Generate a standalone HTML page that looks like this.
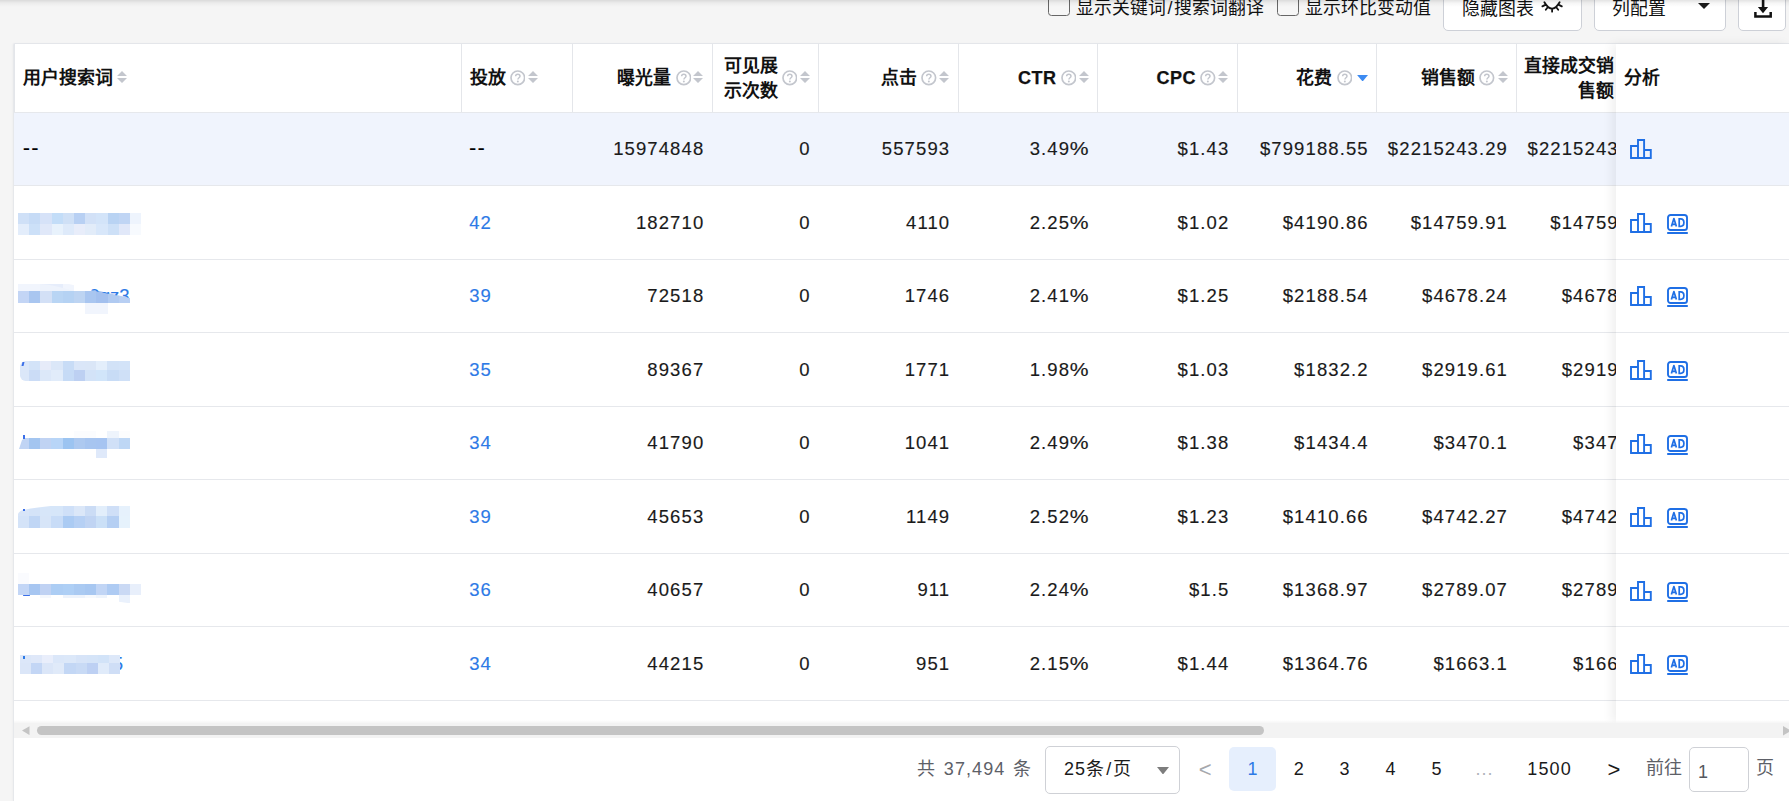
<!DOCTYPE html>
<html lang="zh-CN">
<head>
<meta charset="utf-8">
<title>搜索词</title>
<style>
*{box-sizing:border-box;margin:0;padding:0}
html,body{width:1789px;height:801px;overflow:hidden}
body{background:#f5f5f5;font-family:"Liberation Sans",sans-serif;font-size:17.5px;color:#1a1a1a;position:relative}
.abs{position:absolute}
.topshadow{position:absolute;left:0;top:0;width:1789px;height:7px;z-index:9;background:linear-gradient(rgba(0,0,0,.11),rgba(0,0,0,.035) 45%,rgba(0,0,0,0))}
.card{position:absolute;left:13px;top:43px;width:1776px;height:758px;background:#fff;border-left:1px solid #e6e8eb;border-top:1px solid #e4e6ea;border-top-left-radius:2px;box-shadow:-1px 0 2px rgba(0,0,0,.025)}
.cb{position:absolute;top:-6px;width:22px;height:22px;background:#f6f6f6;border:1.6px solid #666;border-radius:3.5px}
.lbl{position:absolute;top:-6px;height:24px;line-height:24px;font-size:17.9px;font-weight:300;color:#111;white-space:nowrap}
.btn{position:absolute;top:-10px;height:41px;background:#fff;border:1px solid #cdd0d7;border-radius:5px}
.hline{position:absolute;left:14px;width:1775px;height:1px;background:#e6e8ec}
.vline{position:absolute;top:44px;height:68px;width:1px;background:#e4e6ea}
.sum{position:absolute;left:14px;top:113px;width:1775px;height:72px;background:#f0f4fd}
.th{position:absolute;font-weight:bold;font-size:17.9px;line-height:25px;color:#111;white-space:nowrap}
.th.en{font-size:18px;letter-spacing:.5px;-webkit-text-stroke:.25px #111}
.td{position:absolute;height:24px;line-height:24px;font-size:18.5px;letter-spacing:1.1px;white-space:nowrap;color:#1a1a1a;-webkit-text-stroke:.15px}
.td.r{text-align:right}
.td.dash{font-size:22px;letter-spacing:1.2px;-webkit-text-stroke:0;color:#000}
.pc{display:inline-block;transform:scaleX(1.14);transform-origin:100% 50%;margin-left:2.4px;letter-spacing:0;margin-right:1.1px}
.td.a{color:#2d7ae6}
.q{position:absolute;width:15.6px;height:15.6px;margin:-.3px 0 0 -.3px}
.ca{position:absolute;width:10px;height:12px}
.fix{position:absolute;left:1616px;top:44px;width:173px;height:679px;background:#fff;box-shadow:-4px 0 10px rgba(0,0,0,.065)}
.fixsum{position:absolute;left:0;top:69px;width:173px;height:72px;background:#f0f4fd}
.fl{position:absolute;left:0;width:173px;height:1px;background:#e6e8ec}
.mz{position:absolute}
.pg{position:absolute;top:756.8px;height:24px;line-height:24px;font-size:18px;letter-spacing:1.1px;white-space:nowrap;color:#1a1a1a;text-align:center}
</style>
</head>
<body>
<div class="cb" style="left:1048px"></div>
<div class="lbl" style="left:1076px;top:-4.3px">显示关键词<span style="margin:0 1.6px">/</span>搜索词翻译</div>
<div class="cb" style="left:1277px"></div>
<div class="lbl" style="left:1305px;top:-4.3px">显示环比变动值</div>
<div class="btn" style="left:1443px;width:139px"></div>
<div class="lbl" style="left:1462px;top:-3.5px">隐藏图表</div>
<svg class="abs" style="left:1541px;top:0px" width="22" height="13" viewBox="0 0 22 13"><path d="M3.4 2.2Q11.1 15 18.6 2.2M4.3 4.9L1.4 6.4M6.7 7.2L4.8 9.7M11.1 8.6V11.7M15.3 7.2L17.2 9.7M17.9 4.9L20.8 6.4" fill="none" stroke="#111" stroke-width="1.8" stroke-linecap="round"/></svg>
<div class="btn" style="left:1594px;width:132px"></div>
<div class="lbl" style="left:1612px;top:-3.5px">列配置</div>
<svg class="abs" style="left:1698px;top:3px" width="12" height="6" viewBox="0 0 12 6"><path d="M0 0H12L6 6Z" fill="#1a1a1a"/></svg>
<div class="btn" style="left:1738px;width:48px"></div>
<svg class="abs" style="left:1753px;top:0px" width="20" height="19" viewBox="0 0 20 19"><path d="M8.8 0H11.4V7.1H15.1L10 13.2L4.9 7.1H8.8Z" fill="#111"/><path d="M2.4 12V16.6H17.7V12" fill="none" stroke="#111" stroke-width="2.5"/></svg>
<div class="topshadow"></div>
<div class="card"></div>
<div class="sum"></div>
<div class="hline" style="top:112px"></div>
<div class="hline" style="top:185px"></div>
<div class="hline" style="top:259px"></div>
<div class="hline" style="top:332px"></div>
<div class="hline" style="top:406px"></div>
<div class="hline" style="top:479px"></div>
<div class="hline" style="top:553px"></div>
<div class="hline" style="top:626px"></div>
<div class="hline" style="top:700px"></div>
<div class="vline" style="left:14px"></div>
<div class="vline" style="left:461px"></div>
<div class="vline" style="left:572px"></div>
<div class="vline" style="left:712px"></div>
<div class="vline" style="left:818px"></div>
<div class="vline" style="left:958px"></div>
<div class="vline" style="left:1097px"></div>
<div class="vline" style="left:1237px"></div>
<div class="vline" style="left:1376px"></div>
<div class="vline" style="left:1516px"></div>
<div class="th" style="left:23.4px;width:100px;top:66px;text-align:left">用户搜索词</div>
<svg class="ca" style="left:117px;top:71.3px" viewBox="0 0 10 12"><path d="M0 5H10L5 0Z M0 7H10L5 12Z" fill="#c3c6cd"/></svg>
<div class="th" style="left:469.9px;width:60px;top:66px;text-align:left">投放</div>
<svg class="q" style="left:510px;top:70.3px" viewBox="0 0 15 15"><circle cx="7.5" cy="7.5" r="6.55" fill="none" stroke="#c3c6cd" stroke-width="1.6"/><path d="M5.4 6.1c0-1.3 1-2.1 2.1-2.1s2.1.8 2.1 1.9c0 1.5-2 1.6-2 3.2" fill="none" stroke="#c3c6cd" stroke-width="1.45"/><circle cx="7.55" cy="11" r=".95" fill="#c3c6cd"/></svg>
<svg class="ca" style="left:527.6px;top:71.3px" viewBox="0 0 10 12"><path d="M0 5H10L5 0Z M0 7H10L5 12Z" fill="#c3c6cd"/></svg>
<div class="th" style="left:590px;width:81px;top:66px;text-align:right">曝光量</div>
<svg class="q" style="left:676px;top:70.3px" viewBox="0 0 15 15"><circle cx="7.5" cy="7.5" r="6.55" fill="none" stroke="#c3c6cd" stroke-width="1.6"/><path d="M5.4 6.1c0-1.3 1-2.1 2.1-2.1s2.1.8 2.1 1.9c0 1.5-2 1.6-2 3.2" fill="none" stroke="#c3c6cd" stroke-width="1.45"/><circle cx="7.55" cy="11" r=".95" fill="#c3c6cd"/></svg>
<svg class="ca" style="left:693.4px;top:71.3px" viewBox="0 0 10 12"><path d="M0 5H10L5 0Z M0 7H10L5 12Z" fill="#c3c6cd"/></svg>
<div class="th" style="left:723.9px;width:60px;top:53.5px;text-align:left">可见展<br>示次数</div>
<svg class="q" style="left:782px;top:70.3px" viewBox="0 0 15 15"><circle cx="7.5" cy="7.5" r="6.55" fill="none" stroke="#c3c6cd" stroke-width="1.6"/><path d="M5.4 6.1c0-1.3 1-2.1 2.1-2.1s2.1.8 2.1 1.9c0 1.5-2 1.6-2 3.2" fill="none" stroke="#c3c6cd" stroke-width="1.45"/><circle cx="7.55" cy="11" r=".95" fill="#c3c6cd"/></svg>
<svg class="ca" style="left:799.6px;top:71.3px" viewBox="0 0 10 12"><path d="M0 5H10L5 0Z M0 7H10L5 12Z" fill="#c3c6cd"/></svg>
<div class="th" style="left:830px;width:87px;top:66px;text-align:right">点击</div>
<svg class="q" style="left:921.4px;top:70.3px" viewBox="0 0 15 15"><circle cx="7.5" cy="7.5" r="6.55" fill="none" stroke="#c3c6cd" stroke-width="1.6"/><path d="M5.4 6.1c0-1.3 1-2.1 2.1-2.1s2.1.8 2.1 1.9c0 1.5-2 1.6-2 3.2" fill="none" stroke="#c3c6cd" stroke-width="1.45"/><circle cx="7.55" cy="11" r=".95" fill="#c3c6cd"/></svg>
<svg class="ca" style="left:939px;top:71.3px" viewBox="0 0 10 12"><path d="M0 5H10L5 0Z M0 7H10L5 12Z" fill="#c3c6cd"/></svg>
<div class="th en" style="left:970px;width:86.5px;top:66px;text-align:right">CTR</div>
<svg class="q" style="left:1061px;top:70.3px" viewBox="0 0 15 15"><circle cx="7.5" cy="7.5" r="6.55" fill="none" stroke="#c3c6cd" stroke-width="1.6"/><path d="M5.4 6.1c0-1.3 1-2.1 2.1-2.1s2.1.8 2.1 1.9c0 1.5-2 1.6-2 3.2" fill="none" stroke="#c3c6cd" stroke-width="1.45"/><circle cx="7.55" cy="11" r=".95" fill="#c3c6cd"/></svg>
<svg class="ca" style="left:1078.8px;top:71.3px" viewBox="0 0 10 12"><path d="M0 5H10L5 0Z M0 7H10L5 12Z" fill="#c3c6cd"/></svg>
<div class="th en" style="left:1110px;width:86px;top:66px;text-align:right">CPC</div>
<svg class="q" style="left:1200.7px;top:70.3px" viewBox="0 0 15 15"><circle cx="7.5" cy="7.5" r="6.55" fill="none" stroke="#c3c6cd" stroke-width="1.6"/><path d="M5.4 6.1c0-1.3 1-2.1 2.1-2.1s2.1.8 2.1 1.9c0 1.5-2 1.6-2 3.2" fill="none" stroke="#c3c6cd" stroke-width="1.45"/><circle cx="7.55" cy="11" r=".95" fill="#c3c6cd"/></svg>
<svg class="ca" style="left:1218.2px;top:71.3px" viewBox="0 0 10 12"><path d="M0 5H10L5 0Z M0 7H10L5 12Z" fill="#c3c6cd"/></svg>
<div class="th" style="left:1250px;width:82.3px;top:66px;text-align:right">花费</div>
<svg class="q" style="left:1337.2px;top:70.3px" viewBox="0 0 15 15"><circle cx="7.5" cy="7.5" r="6.55" fill="none" stroke="#c3c6cd" stroke-width="1.6"/><path d="M5.4 6.1c0-1.3 1-2.1 2.1-2.1s2.1.8 2.1 1.9c0 1.5-2 1.6-2 3.2" fill="none" stroke="#c3c6cd" stroke-width="1.45"/><circle cx="7.55" cy="11" r=".95" fill="#c3c6cd"/></svg>
<svg class="abs" style="left:1356.9px;top:74.8px" width="11.2" height="6.5" viewBox="0 0 11 6.5"><path d="M0 0H11L5.5 6.5Z" fill="#3d8bf2"/></svg>
<div class="th" style="left:1390px;width:85.3px;top:66px;text-align:right">销售额</div>
<svg class="q" style="left:1479.6px;top:70.3px" viewBox="0 0 15 15"><circle cx="7.5" cy="7.5" r="6.55" fill="none" stroke="#c3c6cd" stroke-width="1.6"/><path d="M5.4 6.1c0-1.3 1-2.1 2.1-2.1s2.1.8 2.1 1.9c0 1.5-2 1.6-2 3.2" fill="none" stroke="#c3c6cd" stroke-width="1.45"/><circle cx="7.55" cy="11" r=".95" fill="#c3c6cd"/></svg>
<svg class="ca" style="left:1497.5px;top:71.3px" viewBox="0 0 10 12"><path d="M0 5H10L5 0Z M0 7H10L5 12Z" fill="#c3c6cd"/></svg>
<div class="th" style="left:1520px;width:94px;top:53.5px;text-align:right">直接成交销<br>售额</div>
<svg class="q" style="left:1618px;top:70.3px" viewBox="0 0 15 15"><circle cx="7.5" cy="7.5" r="6.55" fill="none" stroke="#c3c6cd" stroke-width="1.6"/><path d="M5.4 6.1c0-1.3 1-2.1 2.1-2.1s2.1.8 2.1 1.9c0 1.5-2 1.6-2 3.2" fill="none" stroke="#c3c6cd" stroke-width="1.45"/><circle cx="7.55" cy="11" r=".95" fill="#c3c6cd"/></svg>
<svg class="ca" style="left:1636px;top:71.3px" viewBox="0 0 10 12"><path d="M0 5H10L5 0Z M0 7H10L5 12Z" fill="#c3c6cd"/></svg>
<div class="td dash" style="left:22.8px;top:135.7px">--</div>
<div class="td dash" style="left:469px;top:135.7px">--</div>
<div class="td r" style="left:564.3px;width:140px;top:137px">15974848</div>
<div class="td r" style="left:670.6px;width:140px;top:137px">0</div>
<div class="td r" style="left:810.2px;width:140px;top:137px">557593</div>
<div class="td r" style="left:950px;width:140px;top:137px">3.49<span class="pc">%</span></div>
<div class="td r" style="left:1089.4px;width:140px;top:137px">$1.43</div>
<div class="td r" style="left:1228.7px;width:140px;top:137px">$799188.55</div>
<div class="td r" style="left:1368px;width:140px;top:137px">$2215243.29</div>
<div class="td r" style="left:1507.7px;width:140px;top:137px">$2215243.29</div>
<div class="td a" style="left:469.2px;top:210.5px">42</div>
<div class="td r" style="left:564.3px;width:140px;top:210.5px">182710</div>
<div class="td r" style="left:670.6px;width:140px;top:210.5px">0</div>
<div class="td r" style="left:810.2px;width:140px;top:210.5px">4110</div>
<div class="td r" style="left:950px;width:140px;top:210.5px">2.25<span class="pc">%</span></div>
<div class="td r" style="left:1089.4px;width:140px;top:210.5px">$1.02</div>
<div class="td r" style="left:1228.7px;width:140px;top:210.5px">$4190.86</div>
<div class="td r" style="left:1368px;width:140px;top:210.5px">$14759.91</div>
<div class="td r" style="left:1507.7px;width:140px;top:210.5px">$14759.91</div>
<div class="td a" style="left:469.2px;top:284px">39</div>
<div class="td r" style="left:564.3px;width:140px;top:284px">72518</div>
<div class="td r" style="left:670.6px;width:140px;top:284px">0</div>
<div class="td r" style="left:810.2px;width:140px;top:284px">1746</div>
<div class="td r" style="left:950px;width:140px;top:284px">2.41<span class="pc">%</span></div>
<div class="td r" style="left:1089.4px;width:140px;top:284px">$1.25</div>
<div class="td r" style="left:1228.7px;width:140px;top:284px">$2188.54</div>
<div class="td r" style="left:1368px;width:140px;top:284px">$4678.24</div>
<div class="td r" style="left:1507.7px;width:140px;top:284px">$4678.24</div>
<div class="td a" style="left:469.2px;top:357.5px">35</div>
<div class="td r" style="left:564.3px;width:140px;top:357.5px">89367</div>
<div class="td r" style="left:670.6px;width:140px;top:357.5px">0</div>
<div class="td r" style="left:810.2px;width:140px;top:357.5px">1771</div>
<div class="td r" style="left:950px;width:140px;top:357.5px">1.98<span class="pc">%</span></div>
<div class="td r" style="left:1089.4px;width:140px;top:357.5px">$1.03</div>
<div class="td r" style="left:1228.7px;width:140px;top:357.5px">$1832.2</div>
<div class="td r" style="left:1368px;width:140px;top:357.5px">$2919.61</div>
<div class="td r" style="left:1507.7px;width:140px;top:357.5px">$2919.61</div>
<div class="td a" style="left:469.2px;top:431.25px">34</div>
<div class="td r" style="left:564.3px;width:140px;top:431.25px">41790</div>
<div class="td r" style="left:670.6px;width:140px;top:431.25px">0</div>
<div class="td r" style="left:810.2px;width:140px;top:431.25px">1041</div>
<div class="td r" style="left:950px;width:140px;top:431.25px">2.49<span class="pc">%</span></div>
<div class="td r" style="left:1089.4px;width:140px;top:431.25px">$1.38</div>
<div class="td r" style="left:1228.7px;width:140px;top:431.25px">$1434.4</div>
<div class="td r" style="left:1368px;width:140px;top:431.25px">$3470.1</div>
<div class="td r" style="left:1507.7px;width:140px;top:431.25px">$3470.1</div>
<div class="td a" style="left:469.2px;top:504.75px">39</div>
<div class="td r" style="left:564.3px;width:140px;top:504.75px">45653</div>
<div class="td r" style="left:670.6px;width:140px;top:504.75px">0</div>
<div class="td r" style="left:810.2px;width:140px;top:504.75px">1149</div>
<div class="td r" style="left:950px;width:140px;top:504.75px">2.52<span class="pc">%</span></div>
<div class="td r" style="left:1089.4px;width:140px;top:504.75px">$1.23</div>
<div class="td r" style="left:1228.7px;width:140px;top:504.75px">$1410.66</div>
<div class="td r" style="left:1368px;width:140px;top:504.75px">$4742.27</div>
<div class="td r" style="left:1507.7px;width:140px;top:504.75px">$4742.27</div>
<div class="td a" style="left:469.2px;top:578.25px">36</div>
<div class="td r" style="left:564.3px;width:140px;top:578.25px">40657</div>
<div class="td r" style="left:670.6px;width:140px;top:578.25px">0</div>
<div class="td r" style="left:810.2px;width:140px;top:578.25px">911</div>
<div class="td r" style="left:950px;width:140px;top:578.25px">2.24<span class="pc">%</span></div>
<div class="td r" style="left:1089.4px;width:140px;top:578.25px">$1.5</div>
<div class="td r" style="left:1228.7px;width:140px;top:578.25px">$1368.97</div>
<div class="td r" style="left:1368px;width:140px;top:578.25px">$2789.07</div>
<div class="td r" style="left:1507.7px;width:140px;top:578.25px">$2789.07</div>
<div class="td a" style="left:469.2px;top:651.75px">34</div>
<div class="td r" style="left:564.3px;width:140px;top:651.75px">44215</div>
<div class="td r" style="left:670.6px;width:140px;top:651.75px">0</div>
<div class="td r" style="left:810.2px;width:140px;top:651.75px">951</div>
<div class="td r" style="left:950px;width:140px;top:651.75px">2.15<span class="pc">%</span></div>
<div class="td r" style="left:1089.4px;width:140px;top:651.75px">$1.44</div>
<div class="td r" style="left:1228.7px;width:140px;top:651.75px">$1364.76</div>
<div class="td r" style="left:1368px;width:140px;top:651.75px">$1663.1</div>
<div class="td r" style="left:1507.7px;width:140px;top:651.75px">$1663.1</div>
<div class="mz" style="left:18px;top:213px;width:11.3px;height:10.5px;background:#cfe0f7"></div><div class="mz" style="left:29.2px;top:213px;width:11.3px;height:10.5px;background:#c6dbf6"></div><div class="mz" style="left:40.4px;top:213px;width:11.3px;height:10.5px;background:#d6e2f8"></div><div class="mz" style="left:51.6px;top:213px;width:11.3px;height:10.5px;background:#c3ddf8"></div><div class="mz" style="left:62.8px;top:213px;width:11.3px;height:10.5px;background:#cfe0f6"></div><div class="mz" style="left:74px;top:213px;width:11.3px;height:10.5px;background:#b8d0f3"></div><div class="mz" style="left:85.2px;top:213px;width:11.3px;height:10.5px;background:#d2e1f7"></div><div class="mz" style="left:96.4px;top:213px;width:11.3px;height:10.5px;background:#d3e4f9"></div><div class="mz" style="left:107.6px;top:213px;width:11.3px;height:10.5px;background:#b9d3f3"></div><div class="mz" style="left:118.8px;top:213px;width:11.3px;height:10.5px;background:#c0d5f4"></div><div class="mz" style="left:130px;top:213px;width:11.3px;height:10.5px;background:#eef4fd"></div><div class="mz" style="left:18px;top:223.5px;width:11.3px;height:11px;background:#e3edfb"></div><div class="mz" style="left:29.2px;top:223.5px;width:11.3px;height:11px;background:#cce0f8"></div><div class="mz" style="left:40.4px;top:223.5px;width:11.3px;height:11px;background:#e0e8f9"></div><div class="mz" style="left:51.6px;top:223.5px;width:11.3px;height:11px;background:#e8f2fc"></div><div class="mz" style="left:62.8px;top:223.5px;width:11.3px;height:11px;background:#deeafa"></div><div class="mz" style="left:74px;top:223.5px;width:11.3px;height:11px;background:#e8edfa"></div><div class="mz" style="left:85.2px;top:223.5px;width:11.3px;height:11px;background:#e2ecf9"></div><div class="mz" style="left:96.4px;top:223.5px;width:11.3px;height:11px;background:#d8e7fa"></div><div class="mz" style="left:107.6px;top:223.5px;width:11.3px;height:11px;background:#cde0f7"></div><div class="mz" style="left:118.8px;top:223.5px;width:11.3px;height:11px;background:#e1e8f9"></div><div class="mz" style="left:130px;top:223.5px;width:11.3px;height:11px;background:#f7fafe"></div>
<div class="mz" style="left:18px;top:284px;width:11.3px;height:7px;background:#f1f5fd"></div><div class="mz" style="left:29.2px;top:284px;width:11.3px;height:7px;background:#f1f5fd"></div><div class="mz" style="left:40.4px;top:284px;width:11.3px;height:7px;background:#e6edfb"></div><div class="mz" style="left:51.6px;top:284px;width:11.3px;height:7px;background:#e6edfb"></div><div class="mz" style="left:62.8px;top:284px;width:11.3px;height:7px;background:#f1f5fd"></div><div class="mz" style="left:18px;top:291px;width:11.3px;height:12px;background:#c3d5f5"></div><div class="mz" style="left:29.2px;top:291px;width:11.3px;height:12px;background:#a9c6f0"></div><div class="mz" style="left:40.4px;top:291px;width:11.3px;height:12px;background:#d3e0f6"></div><div class="mz" style="left:51.6px;top:291px;width:11.3px;height:12px;background:#b9d5f4"></div><div class="mz" style="left:62.8px;top:291px;width:11.3px;height:12px;background:#b5d2f3"></div><div class="mz" style="left:74px;top:291px;width:11.3px;height:12px;background:#bdd4f2"></div><div class="mz" style="left:85.2px;top:291px;width:11.3px;height:12px;background:#a9c6f0"></div><div class="mz" style="left:96.4px;top:291px;width:11.3px;height:12px;background:#a3c0ee"></div><div class="mz" style="left:107.6px;top:291px;width:11.3px;height:12px;background:#b0caf1"></div><div class="mz" style="left:118.8px;top:291px;width:11.3px;height:12px;background:#b8cff3"></div><div class="mz" style="left:85.2px;top:303px;width:11.3px;height:11px;background:#f1f5fd"></div><div class="mz" style="left:96.4px;top:303px;width:11.3px;height:11px;background:#f1f5fd"></div>
<svg class="abs" style="left:40px;top:282px" width="92" height="18" viewBox="0 0 92 18"><path d="M0 0H20L92 16.5V0Z" fill="#fff"/><path d="M0 2Q10 2 34 9H0Z" fill="#eef3fc"/></svg>
<div class="td a" style="left:77px;top:283.5px;width:52.5px;text-align:right;letter-spacing:0;clip-path:polygon(0 0,100% 0,100% 14.5px,0 4px)">9gz3</div>
<div class="mz" style="left:20.3px;top:361px;width:8.7px;height:9px;background:#dbe7f9;border-radius:5.72px 0 0 0"></div><div class="mz" style="left:28.9px;top:361px;width:11.3px;height:9px;background:#d3e3f8"></div><div class="mz" style="left:40.1px;top:361px;width:11.3px;height:9px;background:#e6ebf9"></div><div class="mz" style="left:51.3px;top:361px;width:11.3px;height:9px;background:#dbe7f8"></div><div class="mz" style="left:62.5px;top:361px;width:11.3px;height:9px;background:#c8dcf6"></div><div class="mz" style="left:73.7px;top:361px;width:11.3px;height:9px;background:#dae6f8"></div><div class="mz" style="left:84.9px;top:361px;width:11.3px;height:9px;background:#dae6f7"></div><div class="mz" style="left:96.1px;top:361px;width:11.3px;height:9px;background:#e3eefb"></div><div class="mz" style="left:107.3px;top:361px;width:11.3px;height:9px;background:#d2e2f7"></div><div class="mz" style="left:118.5px;top:361px;width:11.3px;height:9px;background:#d3e3f8"></div><div class="mz" style="left:20.3px;top:370px;width:8.7px;height:10.8px;background:#dbe7f9;border-radius:0 0 0 5.72px"></div><div class="mz" style="left:28.9px;top:370px;width:11.3px;height:10.8px;background:#cbdcf6"></div><div class="mz" style="left:40.1px;top:370px;width:11.3px;height:10.8px;background:#dce8f9"></div><div class="mz" style="left:51.3px;top:370px;width:11.3px;height:10.8px;background:#e1ecfa"></div><div class="mz" style="left:62.5px;top:370px;width:11.3px;height:10.8px;background:#c6dbf6"></div><div class="mz" style="left:73.7px;top:370px;width:11.3px;height:10.8px;background:#bdd0f2"></div><div class="mz" style="left:84.9px;top:370px;width:11.3px;height:10.8px;background:#d3e3f8"></div><div class="mz" style="left:96.1px;top:370px;width:11.3px;height:10.8px;background:#d1e5fa"></div><div class="mz" style="left:107.3px;top:370px;width:11.3px;height:10.8px;background:#c8dcf6"></div><div class="mz" style="left:118.5px;top:370px;width:11.3px;height:10.8px;background:#cfe0f7"></div>
<div class="abs" style="left:22.3px;top:361.5px;width:1.7px;height:4px;background:#3b6fe8;transform:skewX(-14deg)"></div>
<div class="mz" style="left:73.7px;top:431px;width:11.3px;height:7px;background:#fbfcfe"></div><div class="mz" style="left:84.9px;top:431px;width:11.3px;height:7px;background:#fbfcfe"></div><div class="mz" style="left:107.3px;top:431px;width:11.3px;height:7px;background:#eef4fc"></div><div class="mz" style="left:118.5px;top:431px;width:11.3px;height:7px;background:#fcfdfe"></div><div class="mz" style="left:17.7px;top:438px;width:11.3px;height:10.9px;background:#c0d4f4"></div><div class="mz" style="left:28.9px;top:438px;width:11.3px;height:10.9px;background:#a3c5f0"></div><div class="mz" style="left:40.1px;top:438px;width:11.3px;height:10.9px;background:#c0d3f3"></div><div class="mz" style="left:51.3px;top:438px;width:11.3px;height:10.9px;background:#b8d5f7"></div><div class="mz" style="left:62.5px;top:438px;width:11.3px;height:10.9px;background:#9cc4f1"></div><div class="mz" style="left:73.7px;top:438px;width:11.3px;height:10.9px;background:#adc9f0"></div><div class="mz" style="left:84.9px;top:438px;width:11.3px;height:10.9px;background:#a7c5f0"></div><div class="mz" style="left:96.1px;top:438px;width:11.3px;height:10.9px;background:#a6c4f1"></div><div class="mz" style="left:107.3px;top:438px;width:11.3px;height:10.9px;background:#d0e0f7"></div><div class="mz" style="left:118.5px;top:438px;width:11.3px;height:10.9px;background:#bed7f5"></div><div class="mz" style="left:96.1px;top:448.9px;width:11.3px;height:9.2px;background:#dfe9fa"></div>
<svg class="abs" style="left:17px;top:437px" width="8" height="12" viewBox="0 0 8 12"><path d="M0 0H8V1L5 3L2 12H0Z" fill="#fff"/></svg>
<div class="abs" style="left:22.8px;top:434.8px;width:1.8px;height:4.2px;background:#3b6fe8"></div>
<div class="mz" style="left:17.7px;top:505.9px;width:11.3px;height:10.2px;background:#d8e5f8"></div><div class="mz" style="left:28.9px;top:505.9px;width:11.3px;height:10.2px;background:#d4e3f8"></div><div class="mz" style="left:40.1px;top:505.9px;width:11.3px;height:10.2px;background:#d7e6f9"></div><div class="mz" style="left:51.3px;top:505.9px;width:11.3px;height:10.2px;background:#d6e6f9"></div><div class="mz" style="left:62.5px;top:505.9px;width:11.3px;height:10.2px;background:#cfe0f8"></div><div class="mz" style="left:73.7px;top:505.9px;width:11.3px;height:10.2px;background:#dbe7f8"></div><div class="mz" style="left:84.9px;top:505.9px;width:11.3px;height:10.2px;background:#cbdcf5"></div><div class="mz" style="left:96.1px;top:505.9px;width:11.3px;height:10.2px;background:#e2eefb"></div><div class="mz" style="left:107.3px;top:505.9px;width:11.3px;height:10.2px;background:#cfdff7"></div><div class="mz" style="left:118.5px;top:505.9px;width:11.3px;height:10.2px;background:#e6f1fc"></div><div class="mz" style="left:17.7px;top:516.1px;width:11.3px;height:11.7px;background:#d4e3f8"></div><div class="mz" style="left:28.9px;top:516.1px;width:11.3px;height:11.7px;background:#c0d6f5"></div><div class="mz" style="left:40.1px;top:516.1px;width:11.3px;height:11.7px;background:#d7e5f8"></div><div class="mz" style="left:51.3px;top:516.1px;width:11.3px;height:11.7px;background:#c8dcf7"></div><div class="mz" style="left:62.5px;top:516.1px;width:11.3px;height:11.7px;background:#abcbf3"></div><div class="mz" style="left:73.7px;top:516.1px;width:11.3px;height:11.7px;background:#b6d0f4"></div><div class="mz" style="left:84.9px;top:516.1px;width:11.3px;height:11.7px;background:#c0d4f3"></div><div class="mz" style="left:96.1px;top:516.1px;width:11.3px;height:11.7px;background:#cbe0f7"></div><div class="mz" style="left:107.3px;top:516.1px;width:11.3px;height:11.7px;background:#b5cff3"></div><div class="mz" style="left:118.5px;top:516.1px;width:11.3px;height:11.7px;background:#e6f2fc"></div>
<svg class="abs" style="left:17px;top:505px" width="46" height="10" viewBox="0 0 46 10"><path d="M0 0H46Q20 2 6 5Q1.5 6.5 0.9 9.5L0 10Z" fill="#fff"/></svg>
<div class="abs" style="left:23px;top:509px;width:2px;height:1.8px;background:#3b6fe8"></div>
<div class="mz" style="left:17.7px;top:572.8px;width:11.3px;height:11.2px;background:#fafbfe"></div><div class="mz" style="left:17.7px;top:584px;width:11.3px;height:10.9px;background:#c3d6f6"></div><div class="mz" style="left:28.9px;top:584px;width:11.3px;height:10.9px;background:#a7c6f1"></div><div class="mz" style="left:40.1px;top:584px;width:11.3px;height:10.9px;background:#c0d2f3"></div><div class="mz" style="left:51.3px;top:584px;width:11.3px;height:10.9px;background:#accdf4"></div><div class="mz" style="left:62.5px;top:584px;width:11.3px;height:10.9px;background:#aecff5"></div><div class="mz" style="left:73.7px;top:584px;width:11.3px;height:10.9px;background:#aacaf2"></div><div class="mz" style="left:84.9px;top:584px;width:11.3px;height:10.9px;background:#a7c7f1"></div><div class="mz" style="left:96.1px;top:584px;width:11.3px;height:10.9px;background:#c1d5f5"></div><div class="mz" style="left:107.3px;top:584px;width:11.3px;height:10.9px;background:#aecbf3"></div><div class="mz" style="left:118.5px;top:584px;width:11.3px;height:10.9px;background:#cad9f4"></div><div class="mz" style="left:129.7px;top:584px;width:11.3px;height:10.9px;background:#e8effb"></div><div class="mz" style="left:40.1px;top:594.9px;width:11.3px;height:3.4px;background:#f5f8fd"></div><div class="mz" style="left:62.5px;top:594.9px;width:11.3px;height:3.4px;background:#edf3fc"></div><div class="mz" style="left:73.7px;top:594.9px;width:11.3px;height:3.4px;background:#edf3fc"></div><div class="mz" style="left:84.9px;top:594.9px;width:11.3px;height:3.4px;background:#f6f9fd"></div><div class="mz" style="left:96.1px;top:594.9px;width:11.3px;height:3.4px;background:#eef4fc"></div><div class="mz" style="left:118.5px;top:594.9px;width:11.3px;height:3.4px;background:#eaf1fc"></div><div class="mz" style="left:118.5px;top:598.3px;width:11.3px;height:5px;background:#eaf1fc"></div>
<svg class="abs" style="left:95px;top:598px" width="36" height="6" viewBox="0 0 36 6"><path d="M0 0.2L36 5.6V6H0Z" fill="#fff"/></svg>
<div class="abs" style="left:23px;top:594.6px;width:6.5px;height:1.5px;background:#3b6fe8;border-radius:1px"></div>
<div class="td a" style="left:100px;top:651.5px;width:23px;text-align:right;letter-spacing:0">5</div>
<div class="mz" style="left:19.5px;top:655px;width:11.3px;height:8px;background:#dce7f9"></div><div class="mz" style="left:30.7px;top:655px;width:11.3px;height:8px;background:#dfe8f9"></div><div class="mz" style="left:41.9px;top:655px;width:11.3px;height:8px;background:#e9eefb"></div><div class="mz" style="left:53.1px;top:655px;width:11.3px;height:8px;background:#dbe7f9"></div><div class="mz" style="left:64.3px;top:655px;width:11.3px;height:8px;background:#dce8f9"></div><div class="mz" style="left:75.5px;top:655px;width:11.3px;height:8px;background:#d7e4f8"></div><div class="mz" style="left:86.7px;top:655px;width:11.3px;height:8px;background:#d5e4f8"></div><div class="mz" style="left:97.9px;top:655px;width:11.3px;height:8px;background:#d2e3f8"></div><div class="mz" style="left:109.1px;top:655px;width:11.3px;height:8px;background:#dde8f9"></div><div class="mz" style="left:19.5px;top:663px;width:11.3px;height:11px;background:#dbe6f8"></div><div class="mz" style="left:30.7px;top:663px;width:11.3px;height:11px;background:#c3d6f5"></div><div class="mz" style="left:41.9px;top:663px;width:11.3px;height:11px;background:#dbe6f8"></div><div class="mz" style="left:53.1px;top:663px;width:11.3px;height:11px;background:#e0eaf9"></div><div class="mz" style="left:64.3px;top:663px;width:11.3px;height:11px;background:#c3d7f5"></div><div class="mz" style="left:75.5px;top:663px;width:11.3px;height:11px;background:#c8daf5"></div><div class="mz" style="left:86.7px;top:663px;width:11.3px;height:11px;background:#bdd0f3"></div><div class="mz" style="left:97.9px;top:663px;width:11.3px;height:11px;background:#e0ebfa"></div><div class="mz" style="left:109.1px;top:663px;width:11.3px;height:11px;background:#cfdef6"></div>
<div class="abs" style="left:23px;top:656px;width:1.6px;height:3px;background:#2d7ae6"></div>
<div class="fix"><div class="fixsum"></div><div class="fl" style="top:68px"></div><div class="fl" style="top:141px"></div><div class="fl" style="top:215px"></div><div class="fl" style="top:288px"></div><div class="fl" style="top:362px"></div><div class="fl" style="top:435px"></div><div class="fl" style="top:509px"></div><div class="fl" style="top:582px"></div><div class="fl" style="top:656px"></div><div class="th" style="left:8px;top:22px">分析</div><svg class="abs" style="left:14px;top:95.4px" width="22" height="20" viewBox="0 0 22 20"><path d="M1 19V7H8M8 19V1H14.1V19M14.1 11H20.8V19M0.1 19H21.7" fill="none" stroke="#1f6fe5" stroke-width="1.9" stroke-linejoin="miter"/></svg><svg class="abs" style="left:14px;top:168.9px" width="22" height="20" viewBox="0 0 22 20"><path d="M1 19V7H8M8 19V1H14.1V19M14.1 11H20.8V19M0.1 19H21.7" fill="none" stroke="#1f6fe5" stroke-width="1.9" stroke-linejoin="miter"/></svg><svg class="abs" style="left:51px;top:169.9px" width="21" height="21" viewBox="0 0 21 21"><rect x="1" y="1" width="19" height="15" rx="2.6" fill="none" stroke="#1f6fe5" stroke-width="1.9"/><path d="M0.2 19H20.8" stroke="#1f6fe5" stroke-width="2"/><path d="M4.4 12.6L6.9 4.6L9.4 12.6M5.3 10.3H8.5" fill="none" stroke="#1f6fe5" stroke-width="1.7" stroke-linejoin="round"/><path d="M12.2 4.8V12.4H13.6C15.8 12.4 16.9 10.8 16.9 8.6S15.8 4.8 13.6 4.8Z" fill="none" stroke="#1f6fe5" stroke-width="1.7"/></svg><svg class="abs" style="left:14px;top:242.4px" width="22" height="20" viewBox="0 0 22 20"><path d="M1 19V7H8M8 19V1H14.1V19M14.1 11H20.8V19M0.1 19H21.7" fill="none" stroke="#1f6fe5" stroke-width="1.9" stroke-linejoin="miter"/></svg><svg class="abs" style="left:51px;top:243.4px" width="21" height="21" viewBox="0 0 21 21"><rect x="1" y="1" width="19" height="15" rx="2.6" fill="none" stroke="#1f6fe5" stroke-width="1.9"/><path d="M0.2 19H20.8" stroke="#1f6fe5" stroke-width="2"/><path d="M4.4 12.6L6.9 4.6L9.4 12.6M5.3 10.3H8.5" fill="none" stroke="#1f6fe5" stroke-width="1.7" stroke-linejoin="round"/><path d="M12.2 4.8V12.4H13.6C15.8 12.4 16.9 10.8 16.9 8.6S15.8 4.8 13.6 4.8Z" fill="none" stroke="#1f6fe5" stroke-width="1.7"/></svg><svg class="abs" style="left:14px;top:315.9px" width="22" height="20" viewBox="0 0 22 20"><path d="M1 19V7H8M8 19V1H14.1V19M14.1 11H20.8V19M0.1 19H21.7" fill="none" stroke="#1f6fe5" stroke-width="1.9" stroke-linejoin="miter"/></svg><svg class="abs" style="left:51px;top:316.9px" width="21" height="21" viewBox="0 0 21 21"><rect x="1" y="1" width="19" height="15" rx="2.6" fill="none" stroke="#1f6fe5" stroke-width="1.9"/><path d="M0.2 19H20.8" stroke="#1f6fe5" stroke-width="2"/><path d="M4.4 12.6L6.9 4.6L9.4 12.6M5.3 10.3H8.5" fill="none" stroke="#1f6fe5" stroke-width="1.7" stroke-linejoin="round"/><path d="M12.2 4.8V12.4H13.6C15.8 12.4 16.9 10.8 16.9 8.6S15.8 4.8 13.6 4.8Z" fill="none" stroke="#1f6fe5" stroke-width="1.7"/></svg><svg class="abs" style="left:14px;top:389.65px" width="22" height="20" viewBox="0 0 22 20"><path d="M1 19V7H8M8 19V1H14.1V19M14.1 11H20.8V19M0.1 19H21.7" fill="none" stroke="#1f6fe5" stroke-width="1.9" stroke-linejoin="miter"/></svg><svg class="abs" style="left:51px;top:390.65px" width="21" height="21" viewBox="0 0 21 21"><rect x="1" y="1" width="19" height="15" rx="2.6" fill="none" stroke="#1f6fe5" stroke-width="1.9"/><path d="M0.2 19H20.8" stroke="#1f6fe5" stroke-width="2"/><path d="M4.4 12.6L6.9 4.6L9.4 12.6M5.3 10.3H8.5" fill="none" stroke="#1f6fe5" stroke-width="1.7" stroke-linejoin="round"/><path d="M12.2 4.8V12.4H13.6C15.8 12.4 16.9 10.8 16.9 8.6S15.8 4.8 13.6 4.8Z" fill="none" stroke="#1f6fe5" stroke-width="1.7"/></svg><svg class="abs" style="left:14px;top:463.15px" width="22" height="20" viewBox="0 0 22 20"><path d="M1 19V7H8M8 19V1H14.1V19M14.1 11H20.8V19M0.1 19H21.7" fill="none" stroke="#1f6fe5" stroke-width="1.9" stroke-linejoin="miter"/></svg><svg class="abs" style="left:51px;top:464.15px" width="21" height="21" viewBox="0 0 21 21"><rect x="1" y="1" width="19" height="15" rx="2.6" fill="none" stroke="#1f6fe5" stroke-width="1.9"/><path d="M0.2 19H20.8" stroke="#1f6fe5" stroke-width="2"/><path d="M4.4 12.6L6.9 4.6L9.4 12.6M5.3 10.3H8.5" fill="none" stroke="#1f6fe5" stroke-width="1.7" stroke-linejoin="round"/><path d="M12.2 4.8V12.4H13.6C15.8 12.4 16.9 10.8 16.9 8.6S15.8 4.8 13.6 4.8Z" fill="none" stroke="#1f6fe5" stroke-width="1.7"/></svg><svg class="abs" style="left:14px;top:536.65px" width="22" height="20" viewBox="0 0 22 20"><path d="M1 19V7H8M8 19V1H14.1V19M14.1 11H20.8V19M0.1 19H21.7" fill="none" stroke="#1f6fe5" stroke-width="1.9" stroke-linejoin="miter"/></svg><svg class="abs" style="left:51px;top:537.65px" width="21" height="21" viewBox="0 0 21 21"><rect x="1" y="1" width="19" height="15" rx="2.6" fill="none" stroke="#1f6fe5" stroke-width="1.9"/><path d="M0.2 19H20.8" stroke="#1f6fe5" stroke-width="2"/><path d="M4.4 12.6L6.9 4.6L9.4 12.6M5.3 10.3H8.5" fill="none" stroke="#1f6fe5" stroke-width="1.7" stroke-linejoin="round"/><path d="M12.2 4.8V12.4H13.6C15.8 12.4 16.9 10.8 16.9 8.6S15.8 4.8 13.6 4.8Z" fill="none" stroke="#1f6fe5" stroke-width="1.7"/></svg><svg class="abs" style="left:14px;top:610.15px" width="22" height="20" viewBox="0 0 22 20"><path d="M1 19V7H8M8 19V1H14.1V19M14.1 11H20.8V19M0.1 19H21.7" fill="none" stroke="#1f6fe5" stroke-width="1.9" stroke-linejoin="miter"/></svg><svg class="abs" style="left:51px;top:611.15px" width="21" height="21" viewBox="0 0 21 21"><rect x="1" y="1" width="19" height="15" rx="2.6" fill="none" stroke="#1f6fe5" stroke-width="1.9"/><path d="M0.2 19H20.8" stroke="#1f6fe5" stroke-width="2"/><path d="M4.4 12.6L6.9 4.6L9.4 12.6M5.3 10.3H8.5" fill="none" stroke="#1f6fe5" stroke-width="1.7" stroke-linejoin="round"/><path d="M12.2 4.8V12.4H13.6C15.8 12.4 16.9 10.8 16.9 8.6S15.8 4.8 13.6 4.8Z" fill="none" stroke="#1f6fe5" stroke-width="1.7"/></svg></div>
<div class="abs" style="left:14px;top:720px;width:1775px;height:3px;background:linear-gradient(rgba(243,243,243,0),rgba(243,243,243,.8))"></div>
<div class="abs" style="left:14px;top:723px;width:1775px;height:15px;background:#f3f3f3"></div>
<div class="abs" style="left:37px;top:726px;width:1227px;height:9px;border-radius:4.5px;background:#c4c4c4"></div>
<svg class="abs" style="left:22px;top:726px" width="7.5" height="9.2" viewBox="0 0 8 9.5"><path d="M8 0V9.5L0 4.75Z" fill="#c4c4c4"/></svg>
<svg class="abs" style="left:1782.5px;top:726px" width="8" height="9.5" viewBox="0 0 8 9.5"><path d="M0 0V9.5L8 4.75Z" fill="#c4c4c4"/></svg>
<div class="pg" style="left:917px;color:#5d6067;word-spacing:1.6px">共 37,494 条</div>
<div class="abs" style="left:1045px;top:746px;width:135px;height:47.5px;border:1px solid #cfd1d6;border-radius:5px;background:#fff"></div>
<div class="pg" style="left:1064px">25条<span style="margin:0 1px">/</span>页</div>
<svg class="abs" style="left:1157px;top:766.5px" width="12" height="7.5" viewBox="0 0 12 7.5"><path d="M0 0H12L6 7.5Z" fill="#7d7d7d"/></svg>
<div class="pg" style="left:1195.2px;width:20px;color:#a6a8ad;font-size:22px;letter-spacing:0;top:757.5px;-webkit-text-stroke:0">&lt;</div>
<div class="abs" style="left:1229px;top:747px;width:47px;height:44px;border-radius:5px;background:#e6effd"></div>
<div class="pg" style="left:1213.05px;width:80px;color:#2d7ae6">1</div>
<div class="pg" style="left:1259.25px;width:80px;color:#1a1a1a">2</div>
<div class="pg" style="left:1305.05px;width:80px;color:#1a1a1a">3</div>
<div class="pg" style="left:1351.05px;width:80px;color:#1a1a1a">4</div>
<div class="pg" style="left:1397.05px;width:80px;color:#1a1a1a">5</div>
<div class="pg" style="left:1444.55px;width:80px;color:#b0b3ba">...</div>
<div class="pg" style="left:1509.55px;width:80px;color:#1a1a1a">1500</div>
<div class="pg" style="left:1574.05px;width:80px;color:#1a1a1a;font-size:22px;letter-spacing:0;top:757.5px">&gt;</div>
<div class="pg" style="left:1646px;top:755.5px;color:#5d6067;letter-spacing:0">前往</div>
<div class="abs" style="left:1689px;top:747px;width:60px;height:45px;border:1px solid #cfd1d6;border-radius:5px;background:#fff"></div>
<div class="pg" style="left:1698px;top:760px;color:#55585e">1</div>
<div class="pg" style="left:1755.5px;top:755.5px;color:#5d6067">页</div>
</body>
</html>
